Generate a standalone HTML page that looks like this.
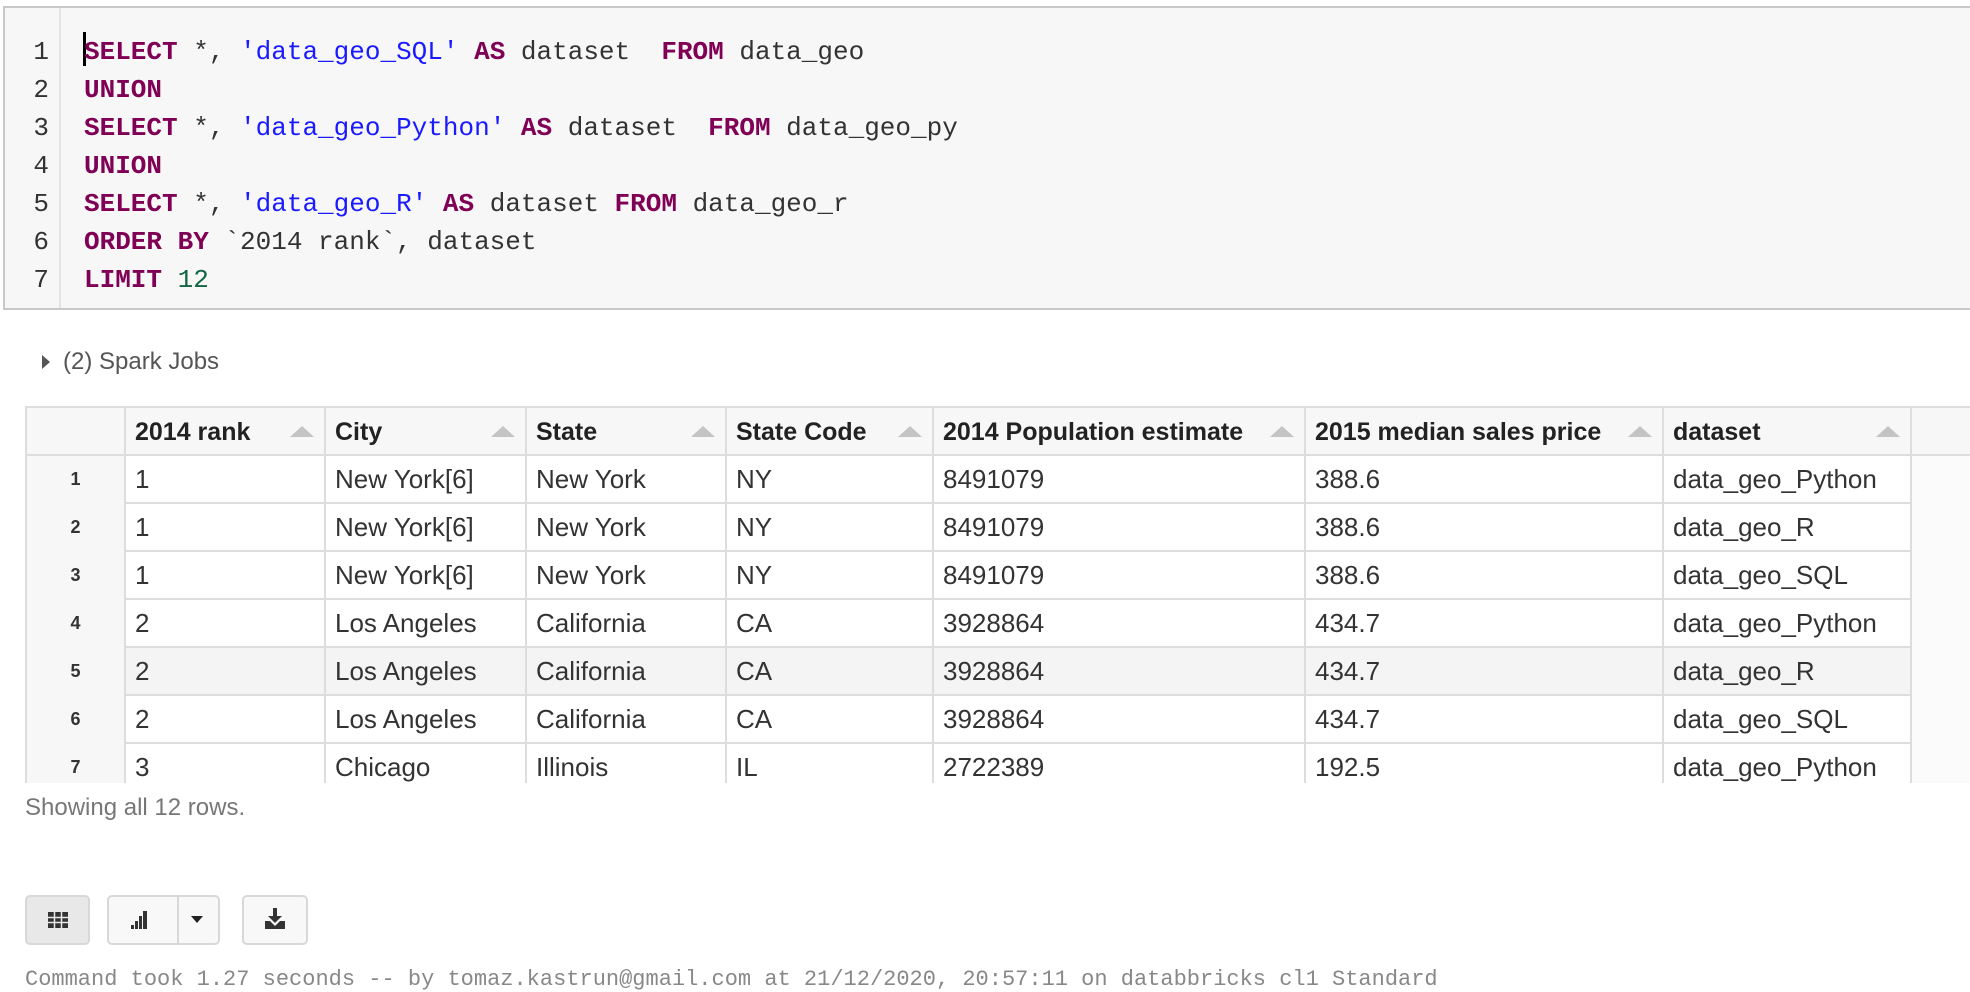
<!DOCTYPE html>
<html><head><meta charset="utf-8"><style>
*{margin:0;padding:0;box-sizing:border-box}
body{width:1970px;height:988px;overflow:hidden;background:#fff;font-family:"Liberation Sans",Arial,sans-serif;color:#333;position:relative}
.code{position:absolute;left:3px;top:6px;width:1975px;height:304px;background:#f7f7f7;border:2px solid #c8c8c8}
.gut{position:absolute;left:0;top:0;width:56px;height:100%;border-right:2px solid #e4e4e4}
.ln{position:absolute;font-family:"Liberation Mono",monospace;font-size:26px;line-height:38px;white-space:pre;color:#333}
.num{right:0;width:49px;text-align:right;left:0}
.k{color:#7f0055;font-weight:bold}.s{color:#1a1aff}.n{color:#116644}
.cur{position:absolute;left:83px;top:32px;width:3px;height:34px;background:#000}
.jobs{position:absolute;left:63px;top:348px;font-size:24px;color:#555}
.tri{position:absolute;left:42px;top:355px;width:0;height:0;border-top:7px solid transparent;border-bottom:7px solid transparent;border-left:8px solid #555}
.tbl{position:absolute;left:25px;top:406px;width:1945px;height:377px;overflow:hidden;border-top:2px solid #ddd;border-left:2px solid #ddd}
.hdr{position:absolute;left:0;top:0;width:1945px;height:48px;background:#f7f7f7;border-bottom:2px solid #ddd}
.c{position:absolute;height:48px;border-right:2px solid #ddd;font-size:26px;line-height:46px;padding-left:11px;white-space:nowrap}
.h{font-weight:bold;color:#222;font-size:25px;line-height:48px}
.ar{position:absolute;right:10px;top:18px;width:0;height:0;border-left:12px solid transparent;border-right:12px solid transparent;border-bottom:11px solid #c4c4c4}
.row{position:absolute;left:0;width:1885px;height:48px;border-bottom:2px solid #ddd}
.idx{background:#f7f7f7;text-align:center;padding-left:0;font-weight:bold;font-size:18px}
.show{position:absolute;left:25px;top:794px;font-size:24px;color:#777}
.btn{position:absolute;top:895px;height:50px;border:2px solid #d8d8d8;border-radius:5px;background:#f8f8f8}
.cmd{position:absolute;left:25px;top:967px;font-family:"Liberation Mono",monospace;font-size:22px;color:#888;white-space:pre}
</style></head><body>
<div class="code"><div class="gut"></div></div>
<div class="ln num" style="top:33px">1
2
3
4
5
6
7</div>
<div class="cur"></div>
<div class="ln" style="left:84px;top:33px"><span class="k">SELECT</span> *, <span class="s">'data_geo_SQL'</span> <span class="k">AS</span> dataset  <span class="k">FROM</span> data_geo
<span class="k">UNION</span>
<span class="k">SELECT</span> *, <span class="s">'data_geo_Python'</span> <span class="k">AS</span> dataset  <span class="k">FROM</span> data_geo_py
<span class="k">UNION</span>
<span class="k">SELECT</span> *, <span class="s">'data_geo_R'</span> <span class="k">AS</span> dataset <span class="k">FROM</span> data_geo_r
<span class="k">ORDER BY</span> `2014 rank`, dataset
<span class="k">LIMIT</span> <span class="n">12</span></div>
<div class="tri"></div><div class="jobs">(2) Spark Jobs</div>
<div class="tbl">
<div style="position:absolute;left:1885px;top:48px;width:60px;height:340px;background:#fbfbfb"></div>
<div class="hdr">
<div class="c" style="left:0;width:99px"></div>
<div class="c h" style="left:97px;width:202px">2014 rank<span class="ar"></span></div>
<div class="c h" style="left:297px;width:203px">City<span class="ar"></span></div>
<div class="c h" style="left:498px;width:202px">State<span class="ar"></span></div>
<div class="c h" style="left:698px;width:209px">State Code<span class="ar"></span></div>
<div class="c h" style="left:905px;width:374px">2014 Population estimate<span class="ar"></span></div>
<div class="c h" style="left:1277px;width:360px">2015 median sales price<span class="ar"></span></div>
<div class="c h" style="left:1635px;width:250px">dataset<span class="ar"></span></div>
</div>
<div class="row" style="top:48px"><div class="c idx" style="left:0;width:99px">1</div><div class="c" style="left:97px;width:202px">1</div><div class="c" style="left:297px;width:203px">New York[6]</div><div class="c" style="left:498px;width:202px">New York</div><div class="c" style="left:698px;width:209px">NY</div><div class="c" style="left:905px;width:374px">8491079</div><div class="c" style="left:1277px;width:360px">388.6</div><div class="c" style="left:1635px;width:250px">data_geo_Python</div></div>
<div class="row" style="top:96px"><div class="c idx" style="left:0;width:99px">2</div><div class="c" style="left:97px;width:202px">1</div><div class="c" style="left:297px;width:203px">New York[6]</div><div class="c" style="left:498px;width:202px">New York</div><div class="c" style="left:698px;width:209px">NY</div><div class="c" style="left:905px;width:374px">8491079</div><div class="c" style="left:1277px;width:360px">388.6</div><div class="c" style="left:1635px;width:250px">data_geo_R</div></div>
<div class="row" style="top:144px"><div class="c idx" style="left:0;width:99px">3</div><div class="c" style="left:97px;width:202px">1</div><div class="c" style="left:297px;width:203px">New York[6]</div><div class="c" style="left:498px;width:202px">New York</div><div class="c" style="left:698px;width:209px">NY</div><div class="c" style="left:905px;width:374px">8491079</div><div class="c" style="left:1277px;width:360px">388.6</div><div class="c" style="left:1635px;width:250px">data_geo_SQL</div></div>
<div class="row" style="top:192px"><div class="c idx" style="left:0;width:99px">4</div><div class="c" style="left:97px;width:202px">2</div><div class="c" style="left:297px;width:203px">Los Angeles</div><div class="c" style="left:498px;width:202px">California</div><div class="c" style="left:698px;width:209px">CA</div><div class="c" style="left:905px;width:374px">3928864</div><div class="c" style="left:1277px;width:360px">434.7</div><div class="c" style="left:1635px;width:250px">data_geo_Python</div></div>
<div class="row" style="top:240px;background:#f4f4f4"><div class="c idx" style="left:0;width:99px">5</div><div class="c" style="left:97px;width:202px">2</div><div class="c" style="left:297px;width:203px">Los Angeles</div><div class="c" style="left:498px;width:202px">California</div><div class="c" style="left:698px;width:209px">CA</div><div class="c" style="left:905px;width:374px">3928864</div><div class="c" style="left:1277px;width:360px">434.7</div><div class="c" style="left:1635px;width:250px">data_geo_R</div></div>
<div class="row" style="top:288px"><div class="c idx" style="left:0;width:99px">6</div><div class="c" style="left:97px;width:202px">2</div><div class="c" style="left:297px;width:203px">Los Angeles</div><div class="c" style="left:498px;width:202px">California</div><div class="c" style="left:698px;width:209px">CA</div><div class="c" style="left:905px;width:374px">3928864</div><div class="c" style="left:1277px;width:360px">434.7</div><div class="c" style="left:1635px;width:250px">data_geo_SQL</div></div>
<div class="row" style="top:336px"><div class="c idx" style="left:0;width:99px">7</div><div class="c" style="left:97px;width:202px">3</div><div class="c" style="left:297px;width:203px">Chicago</div><div class="c" style="left:498px;width:202px">Illinois</div><div class="c" style="left:698px;width:209px">IL</div><div class="c" style="left:905px;width:374px">2722389</div><div class="c" style="left:1277px;width:360px">192.5</div><div class="c" style="left:1635px;width:250px">data_geo_Python</div></div>
</div>
<div class="show">Showing all 12 rows.</div>
<div class="btn" style="left:25px;width:65px;background:#e8e8e8"><svg width="61" height="46" viewBox="0 0 61 46"><rect x="21" y="15" width="20" height="16" fill="#333"/><g stroke="#e8e8e8" stroke-width="1.5"><line x1="21" y1="20.5" x2="41" y2="20.5"/><line x1="21" y1="25.5" x2="41" y2="25.5"/><line x1="27.5" y1="15" x2="27.5" y2="31"/><line x1="34.5" y1="15" x2="34.5" y2="31"/></g></svg></div>
<div class="btn" style="left:107px;width:113px"><svg width="109" height="46" viewBox="0 0 109 46"><rect x="22" y="28" width="3" height="4" fill="#333"/><rect x="26" y="24" width="3" height="8" fill="#333"/><rect x="30" y="19" width="3" height="13" fill="#333"/><rect x="34" y="14" width="4" height="18" fill="#333"/><line x1="69" y1="0" x2="69" y2="46" stroke="#d8d8d8" stroke-width="2"/><path d="M82 19h12l-6 7z" fill="#222"/></svg></div>
<div class="btn" style="left:242px;width:66px"><svg width="62" height="46" viewBox="0 0 62 46"><rect x="29" y="11" width="4" height="9" fill="#333"/><path d="M24 19h14l-7 7z" fill="#333"/><path d="M21 24h5l5 5 5-5h5v8H21z" fill="#333"/></svg></div>
<div class="cmd">Command took 1.27 seconds -- by tomaz.kastrun@gmail.com at 21/12/2020, 20:57:11 on databbricks cl1 Standard</div>
</body></html>
